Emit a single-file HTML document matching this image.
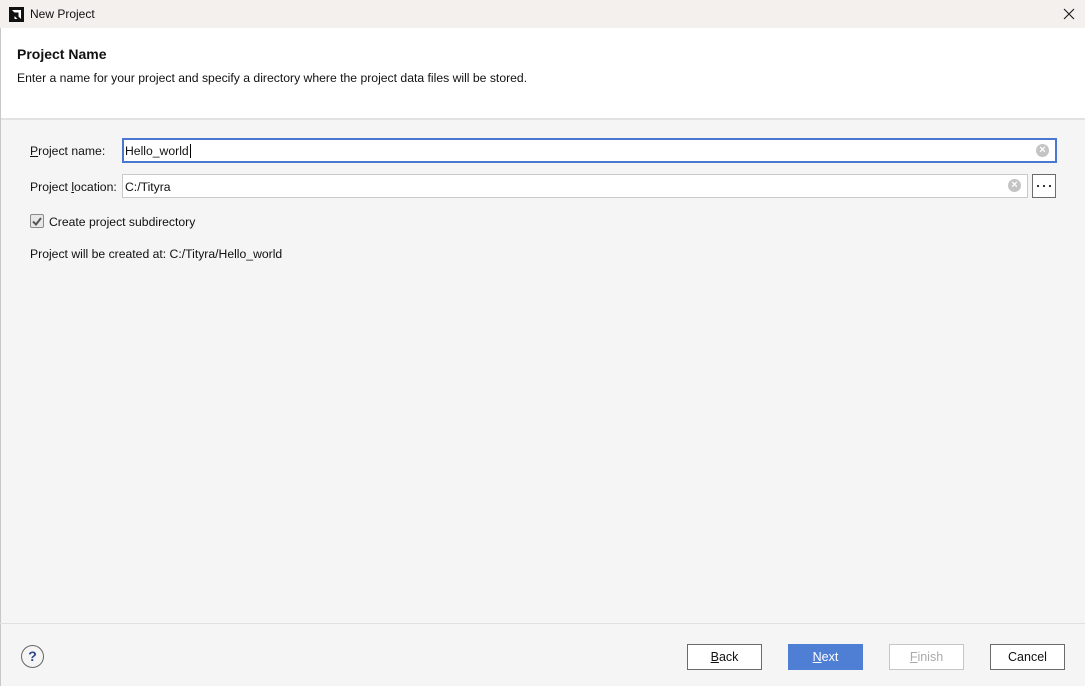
<!DOCTYPE html>
<html><head><style>
*{margin:0;padding:0;box-sizing:border-box}
body{width:1085px;height:686px;position:relative;background:#f5f5f5;font-family:"Liberation Sans",Arial,sans-serif;font-size:12.2px;color:#111;overflow:hidden}
.abs{position:absolute}
u{text-decoration:underline}
.btn{position:absolute;top:644px;width:75px;height:26px;border:1px solid #6b6b6b;background:#fff;text-align:center;line-height:24px;font-size:12.5px}
.clr{position:absolute;width:13px;height:13px;border-radius:50%;background:#c4c4c4;color:#fff;font-size:11px;line-height:13px;text-align:center;font-weight:bold}
</style></head><body>
<div class="abs" style="left:0;top:0;width:1085px;height:28px;background:#f3f0ed"></div>
<svg class="abs" style="left:9px;top:7px" width="15" height="15" viewBox="0 0 15 15"><rect width="15" height="15" fill="#111"/><path d="M3 3H12V12L9.5 9.5V5.5H5.5Z" fill="#fff"/><path d="M3 6.5L5.5 9V12H8.5L6 9.5Z" fill="#fff"/></svg>
<div class="abs" style="left:30px;top:7px;font-size:12px">New Project</div>
<svg class="abs" style="left:1063px;top:8px" width="12" height="12"><path d="M1 1L11 11M11 1L1 11" stroke="#222" stroke-width="1.2"/></svg>
<div class="abs" style="left:0;top:28px;width:1085px;height:90px;background:#fff"></div>
<div class="abs" style="left:0;top:118px;width:1085px;height:2px;background:#e2e2e2"></div>
<div class="abs" style="left:0;top:28px;width:1px;height:658px;background:#c8c8c8"></div>
<div class="abs" style="left:17px;top:46px;font-size:14px;font-weight:bold">Project Name</div>
<div class="abs" style="left:17px;top:71px">Enter a name for your project and specify a directory where the project data files will be stored.</div>

<div class="abs" style="left:30px;top:144px"><u>P</u>roject name:</div>
<div class="abs" style="left:122px;top:138px;width:935px;height:25px;border:2px solid #4a78d0;background:#fff"></div>
<div class="abs" style="left:125px;top:144px">Hello_world<span style="border-left:1px solid #000;margin-left:1px"></span></div>
<div class="clr" style="left:1036px;top:144px">×</div>

<div class="abs" style="left:30px;top:180px">Project <u>l</u>ocation:</div>
<div class="abs" style="left:122px;top:174px;width:906px;height:24px;border:1px solid #c9c9c9;background:#fff"></div>
<div class="abs" style="left:125px;top:180px">C:/Tityra</div>
<div class="clr" style="left:1008px;top:179px">×</div>
<div class="abs" style="left:1032px;top:174px;width:24px;height:24px;border:1px solid #6b6b6b;background:#fff"></div>
<div class="abs" style="left:1037px;top:185px;width:2px;height:2px;background:#333"></div>
<div class="abs" style="left:1043px;top:185px;width:2px;height:2px;background:#333"></div>
<div class="abs" style="left:1049px;top:185px;width:2px;height:2px;background:#333"></div>

<div class="abs" style="left:30px;top:214px;width:14px;height:14px;border:1px solid #8a8a8a;border-radius:2px;background:#e8e8e8"></div>
<svg class="abs" style="left:31px;top:215px" width="12" height="12"><path d="M2 6.5L5 9.5L10 3" stroke="#555" stroke-width="2" fill="none"/></svg>
<div class="abs" style="left:49px;top:215px">Create project subdirectory</div>
<div class="abs" style="left:30px;top:247px">Project will be created at: C:/Tityra/Hello_world</div>

<div class="abs" style="left:0;top:623px;width:1085px;height:1px;background:#e0e0e0"></div>
<div class="abs" style="left:21px;top:645px;width:23px;height:23px;border:1px solid #666;border-radius:50%;text-align:center;line-height:21px;font-weight:bold;font-size:14px;color:#2c4a8a">?</div>
<div class="btn" style="left:687px"><u>B</u>ack</div>
<div class="btn" style="left:788px;background:#4f7fd4;border-color:#4f7fd4;color:#fff"><u>N</u>ext</div>
<div class="btn" style="left:889px;border-color:#c6c6c6;color:#aaa"><u>F</u>inish</div>
<div class="btn" style="left:990px">Cancel</div>
</body></html>
